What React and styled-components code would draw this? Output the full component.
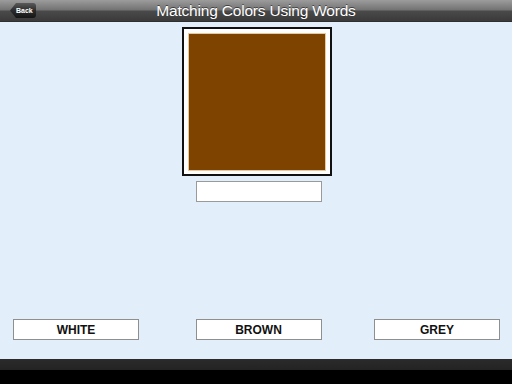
import React from "react";
import styled, { createGlobalStyle } from "styled-components";

const GlobalStyle = createGlobalStyle`
  html, body { margin: 0; padding: 0; }
  body { font-family: "Liberation Sans", Arial, sans-serif; }
`;

const Page = styled.div`
  width: 512px;
  height: 384px;
  display: flex;
  flex-direction: column;
  background: #e2effa;
  overflow: hidden;
`;

const TopBar = styled.div`
  height: 21px;
  flex: none;
  display: flex;
  align-items: center;
  justify-content: center;
  position: relative;
  background: linear-gradient(to bottom, #9c9c9c 0%, #727272 48%, #4a4a4a 52%, #3a3a3a 100%);
  border-bottom: 1px solid #2e2e2e;
`;

const Title = styled.div`
  color: #fff;
  font-size: 15.5px;
  letter-spacing: -0.2px;
  text-shadow: 0 -1px 0 rgba(0, 0, 0, 0.5);
`;

const BackButton = styled.div`
  position: absolute;
  left: 10px;
  top: 3px;
  height: 15px;
  width: 26px;
  box-sizing: border-box;
  padding-left: 6px;
  display: flex;
  align-items: center;
  font-size: 7px;
  font-weight: bold;
  color: #fff;
  background: linear-gradient(to bottom, #5a5a5a 0%, #2c2c2c 50%, #151515 100%);
  border-radius: 0 3px 3px 0;
  clip-path: polygon(6px 0, 100% 0, 100% 100%, 6px 100%, 0 50%);
`;

const Content = styled.div`
  flex: 1;
  display: flex;
  flex-direction: column;
  align-items: center;
  padding-top: 5px;
`;

const Frame = styled.div`
  width: 150px;
  height: 149px;
  box-sizing: border-box;
  border: 2px solid #111;
  background: #fff;
  padding: 5px 5px 4px 5px;
  margin-left: 1px;
`;

const Swatch = styled.div`
  width: 100%;
  height: 100%;
  background: ${(p) => p.color};
  box-shadow: 0 0 0 1px #e8c9a0;
`;

const AnswerBox = styled.div`
  width: 126px;
  height: 21px;
  box-sizing: border-box;
  margin-top: 5px;
  margin-left: 6px;
  background: #fff;
  border: 1px solid #9a9a9a;
`;

const ChoiceRow = styled.div`
  margin-top: auto;
  margin-bottom: 19px;
  width: 100%;
  box-sizing: border-box;
  padding: 0 12px 0 13px;
  display: flex;
  justify-content: space-between;
`;

const Choice = styled.div`
  width: 126px;
  height: 21px;
  box-sizing: border-box;
  background: #fff;
  border: 1px solid #8f8f8f;
  display: flex;
  align-items: center;
  justify-content: center;
  font-size: 12px;
  font-weight: bold;
  color: #111;
  margin-left: ${(p) => p.shift || 0}px;
`;

const BottomBar = styled.div`
  height: 25px;
  flex: none;
  background: linear-gradient(to bottom, #2b2b2b 0%, #232323 45%, #000 46%, #000 100%);
`;

const choices = [
  { label: "WHITE", shift: 0 },
  { label: "BROWN", shift: 4 },
  { label: "GREY", shift: 0 },
];

export default function App() {
  return (
    <Page>
      <GlobalStyle />
      <TopBar>
        <BackButton>Back</BackButton>
        <Title>Matching Colors Using Words</Title>
      </TopBar>
      <Content>
        <Frame>
          <Swatch color="#7f4300" />
        </Frame>
        <AnswerBox />
        <ChoiceRow>
          {choices.map((c) => (
            <Choice key={c.label} shift={c.shift}>{c.label}</Choice>
          ))}
        </ChoiceRow>
      </Content>
      <BottomBar />
    </Page>
  );
}
